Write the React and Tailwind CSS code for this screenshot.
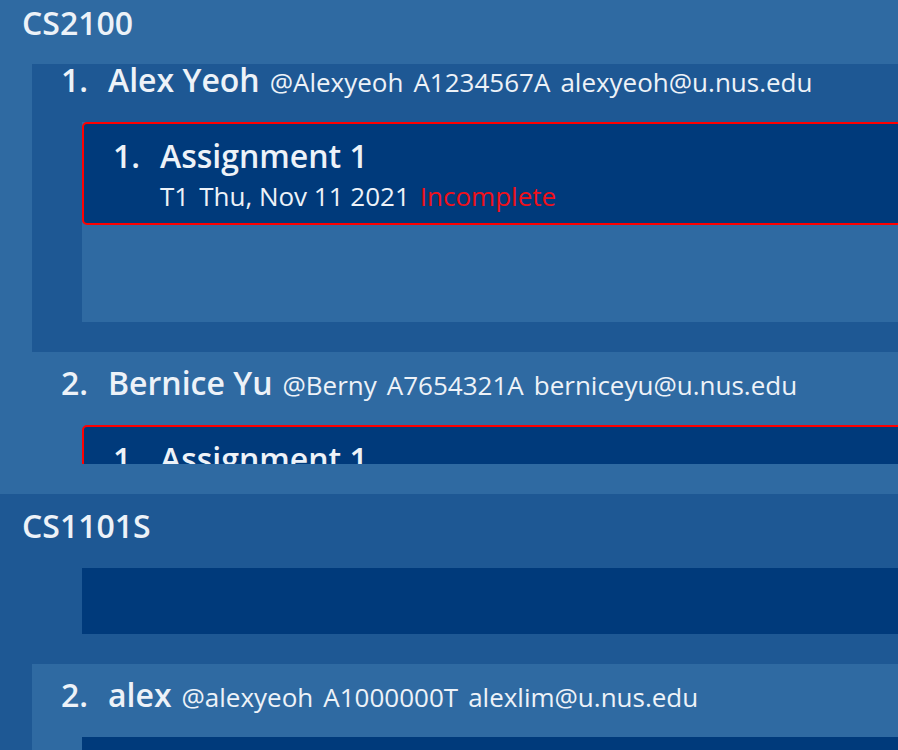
const people = [
  {
    id: 1,
    name: 'Alex Yeoh',
    tele: '@Alexyeoh',
    sid: 'A1234567A',
    email: 'alexyeoh@u.nus.edu',
  },
  {
    id: 2,
    name: 'Bernice Yu',
    tele: '@Berny',
    sid: 'A7654321A',
    email: 'berniceyu@u.nus.edu',
  },
];

function NameRow({ index, p }) {
  return (
    <div className="flex items-baseline h-[31px] leading-[31px]">
      <span className="w-[47px] text-[32px] font-semibold">{index}.</span>
      <span className="text-[32px] font-semibold">{p.name}</span>
      <div className="ml-[10px] flex gap-[10px] text-[26px]">
        <span>{p.tele}</span>
        <span>{p.sid}</span>
        <span>{p.email}</span>
      </div>
    </div>
  );
}

function AssignmentCard() {
  return (
    <div className="border-2 border-[#ff0000] rounded-[5px] bg-[#003a7b] pl-[29px] pt-[16px] pb-[14px]">
      <div className="flex items-baseline h-[31px] text-[32px] leading-[31px] font-semibold">
        <span className="w-[47px]">1.</span>
        <span>Assignment 1</span>
      </div>
      <div className="ml-[47px] mt-[12px] flex gap-[10px] h-[26px] text-[26px] leading-[26px]">
        <span>T1</span>
        <span>Thu, Nov 11 2021</span>
        <span className="text-[#f0101a]">Incomplete</span>
      </div>
    </div>
  );
}

export default function App() {
  return (
    <div className="w-[898px] h-[750px] overflow-hidden bg-[#2f6aa2] text-[#edf2f8] font-['Open_Sans',sans-serif]">
      <div className="w-[980px]">
        {/* module CS2100 */}
        <div className="bg-[#2f6aa2] pt-[7px] pb-[30px]">
          <div className="pl-[22px] text-[32px] font-semibold leading-[31px]">CS2100</div>
          <div className="ml-[32px] mt-[26px] h-[400px] overflow-hidden">
            <div className="bg-[#1e5894] pl-[29px] pb-[30px]">
              <NameRow index={1} p={people[0]} />
              <div className="ml-[21px] mt-[27px] h-[200px] bg-[#2f6aa2]">
                <AssignmentCard />
              </div>
            </div>
            <div className="bg-[#2f6aa2] pl-[29px] pt-[15px] pb-[30px]">
              <NameRow index={2} p={people[1]} />
              <div className="ml-[21px] mt-[27px] h-[200px] bg-[#2f6aa2]">
                <AssignmentCard />
              </div>
            </div>
          </div>
        </div>

        {/* module CS1101S */}
        <div className="bg-[#1e5894] pt-[16px]">
          <div className="pl-[22px] text-[32px] font-semibold leading-[31px]">CS1101S</div>
          <div className="ml-[32px] mt-[26px]">
            <div className="bg-[#1e5894] pt-[1px] pb-[30px]">
              <div className="ml-[50px] h-[66px] bg-[#003a7b]" />
            </div>
            <div className="bg-[#2f6aa2] pl-[29px] pt-[15px]">
              <NameRow index={2} p={{ name: 'alex', tele: '@alexyeoh', sid: 'A1000000T', email: 'alexlim@u.nus.edu' }} />
              <div className="ml-[21px] mt-[27px] h-[200px] bg-[#003a7b]" />
            </div>
          </div>
        </div>
      </div>
    </div>
  );
}
